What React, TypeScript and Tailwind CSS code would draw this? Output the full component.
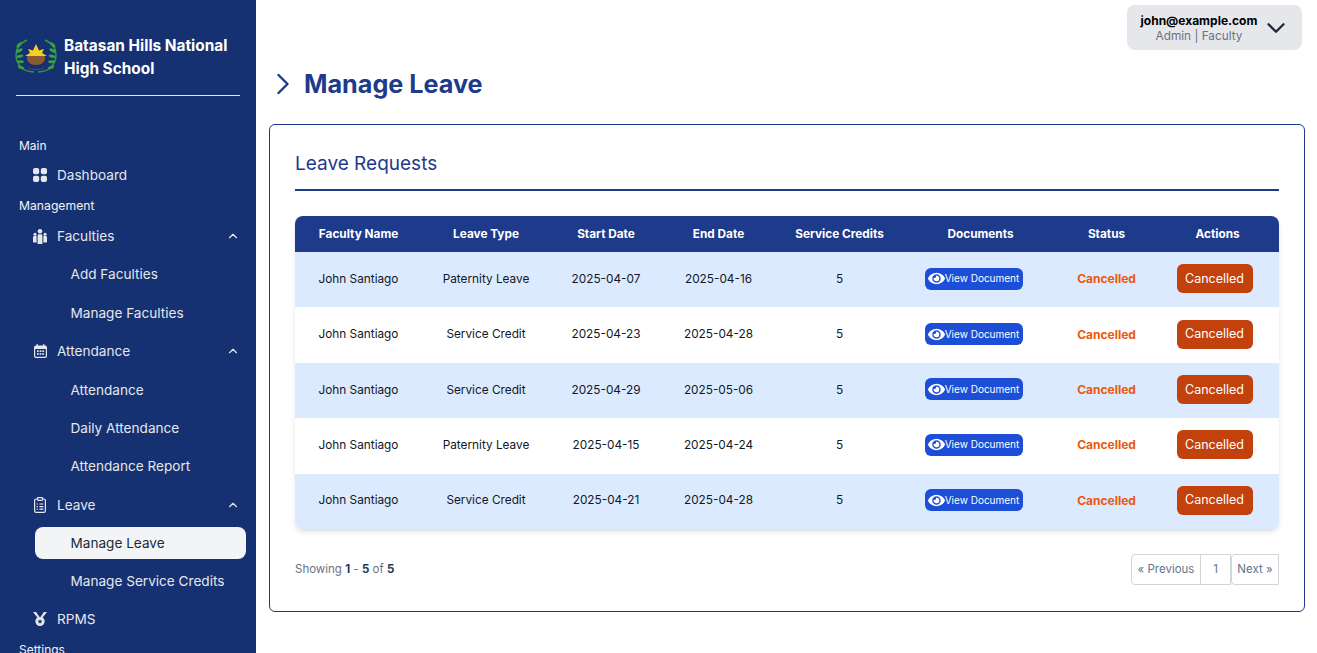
import { ChevronDown, ChevronRight, ChevronUp } from "lucide-react"
import { FaEye } from "react-icons/fa"

const rows = [
  { type: "Paternity Leave", start: "2025-04-07", end: "2025-04-16" },
  { type: "Service Credit", start: "2025-04-23", end: "2025-04-28" },
  { type: "Service Credit", start: "2025-04-29", end: "2025-05-06" },
  { type: "Paternity Leave", start: "2025-04-15", end: "2025-04-24" },
  { type: "Service Credit", start: "2025-04-21", end: "2025-04-28" },
]

const headers = [
  { label: "Faculty Name", width: "w-[127px]" },
  { label: "Leave Type", width: "w-[128px]" },
  { label: "Start Date", width: "w-[112px]" },
  { label: "End Date", width: "w-[113px]" },
  { label: "Service Credits", width: "w-[129px]" },
  { label: "Documents", width: "w-[153px]" },
  { label: "Status", width: "w-[99px]" },
  { label: "Actions", width: "w-[123px]" },
]

function Logo() {
  const leaves = [0, 1, 2, 3, 4]
  return (
    <svg width="46" height="38" viewBox="0 0 46 38" className="shrink-0">
      <path d="M21 35 C10 35 3 27 3 18 C3 11 7 6 14 3" fill="none" stroke="#2f9e3f" strokeWidth="1.4" />
      <path d="M25 35 C36 35 43 27 43 18 C43 11 39 6 32 3" fill="none" stroke="#2f9e3f" strokeWidth="1.4" />
      {leaves.map((i) => (
        <g key={i}>
          <ellipse cx={6 + i * 0.5} cy={8 + i * 5.6} rx="3.4" ry="1.5" fill="#37a244" transform={`rotate(${-50 + i * 18} ${6 + i * 0.5} ${8 + i * 5.6})`} />
          <ellipse cx={40 - i * 0.5} cy={8 + i * 5.6} rx="3.4" ry="1.5" fill="#37a244" transform={`rotate(${50 - i * 18} ${40 - i * 0.5} ${8 + i * 5.6})`} />
        </g>
      ))}
      <path d="M12 19 L17 16 L15 12 L20 13.5 L23 7 L26 13.5 L31 12 L29 16 L34 19 Z" fill="#f5d020" />
      <path d="M14 19 H32 C33 25 28 28 23 28 C18 28 13 25 14 19 Z" fill="#8a5a34" />
      <path d="M15 31 C19 33 27 33 31 31" fill="none" stroke="#7a3a4a" strokeWidth="1" />
    </svg>
  )
}

function DashboardIcon() {
  return (
    <svg width="14" height="14" viewBox="0 0 14 14" fill="currentColor">
      <rect x="0" y="0" width="6.2" height="6.2" rx="2" />
      <rect x="7.8" y="0" width="6.2" height="6.2" rx="2" />
      <rect x="0" y="7.8" width="6.2" height="6.2" rx="2" />
      <rect x="7.8" y="7.8" width="6.2" height="6.2" rx="2" />
    </svg>
  )
}

function PeopleIcon() {
  return (
    <svg width="14" height="15" viewBox="0 0 14 15" fill="currentColor">
      <circle cx="7" cy="2.3" r="2.3" />
      <circle cx="2" cy="5.2" r="1.5" />
      <circle cx="12" cy="5.2" r="1.5" />
      <path d="M4.6 6.6 C4.6 5.6 5.4 5.2 7 5.2 C8.6 5.2 9.4 5.6 9.4 6.6 V15 H4.6 Z" />
      <path d="M0 8.4 C0 7.4 .7 7 1.7 7 H3.6 V13.6 H1 C.4 13.6 0 13.2 0 12.6 Z" />
      <path d="M14 8.4 C14 7.4 13.3 7 12.3 7 H10.4 V13.6 H13 C13.6 13.6 14 13.2 14 12.6 Z" />
    </svg>
  )
}

function CalendarIcon() {
  return (
    <svg width="13" height="14" viewBox="0 0 13 14" fill="currentColor">
      <rect x="2.5" y="0" width="1.4" height="3" rx=".7" />
      <rect x="9.1" y="0" width="1.4" height="3" rx=".7" />
      <path d="M2 1.5 H11 C12.2 1.5 13 2.3 13 3.5 V12 C13 13.2 12.2 14 11 14 H2 C.8 14 0 13.2 0 12 V3.5 C0 2.3 .8 1.5 2 1.5 Z M1.2 5 V11.8 C1.2 12.4 1.6 12.8 2.2 12.8 H10.8 C11.4 12.8 11.8 12.4 11.8 11.8 V5 Z" fillRule="evenodd" />
      <rect x="3" y="6.3" width="1.7" height="1.7" />
      <rect x="5.65" y="6.3" width="1.7" height="1.7" />
      <rect x="8.3" y="6.3" width="1.7" height="1.7" />
      <rect x="3" y="9.1" width="1.7" height="1.7" />
      <rect x="5.65" y="9.1" width="1.7" height="1.7" />
      <rect x="8.3" y="9.1" width="1.7" height="1.7" />
    </svg>
  )
}

function ClipboardIcon() {
  return (
    <svg width="12" height="16" viewBox="0 0 12 16" fill="none" stroke="currentColor" strokeWidth="1.2">
      <rect x=".6" y="2" width="10.8" height="13.4" rx="1.6" />
      <rect x="3.4" y=".6" width="5.2" height="2.8" rx=".8" fill="#163172" />
      <path d="M2.6 7 H3.8 M5.4 7 H9.4 M2.6 9.6 H3.8 M5.4 9.6 H9.4 M2.6 12.2 H3.8 M5.4 12.2 H9.4" />
    </svg>
  )
}

function MedalIcon() {
  return (
    <svg width="16" height="16" viewBox="0 0 16 16" fill="currentColor">
      <path d="M0 0 H3.6 L7 5 L5.2 6.6 Z" />
      <path d="M16 0 H12.4 L9 5 L10.8 6.6 Z" />
      <path fillRule="evenodd" d="M8 5.4 A5.3 5.3 0 1 1 8 16 A5.3 5.3 0 1 1 8 5.4 Z M8 8.2 L8.8 9.8 L10.6 10 L9.3 11.3 L9.6 13 L8 12.2 L6.4 13 L6.7 11.3 L5.4 10 L7.2 9.8 Z" />
    </svg>
  )
}

function NavGroup({ icon, label }: { icon: React.ReactNode; label: string }) {
  return (
    <div className="flex h-[38.4px] items-center pl-[33px] pr-4 text-[#e5e7eb]">
      <span className="flex w-[14px] justify-center">{icon}</span>
      <span className="ml-[10px] flex-1">{label}</span>
      <ChevronUp size={14} />
    </div>
  )
}

function SubItem({ label, active }: { label: string; active?: boolean }) {
  return (
    <div className="py-[3.2px] pl-[35px] pr-[10px]">
      <div
        className={
          active
            ? "flex h-[32px] items-center rounded-lg bg-[#f3f4f6] pl-[35.5px] text-[#1f2937]"
            : "flex h-[32px] items-center pl-[35.5px] text-[#e5e7eb]"
        }
      >
        {label}
      </div>
    </div>
  )
}

function Sidebar() {
  return (
    <aside className="h-[653px] w-64 shrink-0 overflow-hidden bg-[#163172] text-[13.6px]">
      <div className="mx-4 mt-[33px] flex h-[63px] items-start border-b border-[#e5e7eb]">
        <div className="-ml-[3px] mt-[4px]"><Logo /></div>
        <div className="ml-[5px] mt-[1px] text-[15.4px] font-bold leading-[23px] text-white">
          Batasan Hills National High School
        </div>
      </div>
      <div className="mt-[41px] pl-[19px] text-[12px] leading-[18px] text-[#f3f4f6]">Main</div>
      <div className="flex h-[40px] items-center pl-[33px] text-[#e5e7eb]">
        <DashboardIcon />
        <span className="ml-[10px]">Dashboard</span>
      </div>
      <div className="mt-[2px] pl-[19px] text-[12.2px] leading-[18px] text-[#f3f4f6]">Management</div>
      <div className="mt-[2px]">
        <NavGroup icon={<PeopleIcon />} label="Faculties" />
        <SubItem label="Add Faculties" />
        <SubItem label="Manage Faculties" />
        <NavGroup icon={<CalendarIcon />} label="Attendance" />
        <SubItem label="Attendance" />
        <SubItem label="Daily Attendance" />
        <SubItem label="Attendance Report" />
        <NavGroup icon={<ClipboardIcon />} label="Leave" />
        <SubItem label="Manage Leave" active />
        <SubItem label="Manage Service Credits" />
        <div className="flex h-[36.4px] items-center pl-[33px] text-[#e5e7eb]">
          <span className="flex w-[14px] justify-center"><MedalIcon /></span>
          <span className="ml-[10px]">RPMS</span>
        </div>
      </div>
      <div className="mt-[4px] pl-[19px] text-[12px] leading-[18px] text-[#f3f4f6]">Settings</div>
    </aside>
  )
}

function LeaveTable() {
  return (
    <div className="overflow-hidden rounded-lg shadow-md">
      <table className="w-full table-fixed border-collapse text-center text-[11.8px]">
        <thead>
          <tr className="h-[36px] bg-[#1e3a8a] text-white">
            {headers.map((h) => (
              <th key={h.label} className={`${h.width} pt-[1px] font-bold`}>
                {h.label}
              </th>
            ))}
          </tr>
        </thead>
        <tbody>
          {rows.map((row, i) => (
            <tr key={i} className={i % 2 === 0 ? "h-[55.4px] bg-[#dbeafe] text-[#111827]" : "h-[55.4px] bg-white text-[#111827]"}>
              <td>John Santiago</td>
              <td>{row.type}</td>
              <td>{row.start}</td>
              <td>{row.end}</td>
              <td>5</td>
              <td>
                <span className="mr-[14px] inline-flex h-[22px] w-[98px] -translate-y-[1px] items-center justify-center rounded-md bg-[#1d4ed8] align-middle text-[10px] text-white">
                  <FaEye size={17} />
                  View Document
                </span>
              </td>
              <td className="pb-[1px] text-[12px] font-bold text-[#ea580c]">Cancelled</td>
              <td>
                <span className="mr-[6px] inline-flex h-[29px] w-[76px] -translate-y-[1px] items-center justify-center rounded-md bg-[#c2410c] pt-[1px] align-middle text-[12.5px] text-white">
                  Cancelled
                </span>
              </td>
            </tr>
          ))}
        </tbody>
      </table>
    </div>
  )
}

export default function App() {
  return (
    <div className="flex h-[653px] overflow-hidden bg-white font-['Inter',sans-serif]">
      <Sidebar />
      <main className="min-w-0 flex-1">
        <div className="flex justify-end pr-[15px] pt-[5px]">
          <div className="flex h-[45px] w-[175px] items-center rounded-lg bg-[#e5e7eb] pl-[13px] pr-[11px]">
            <div className="flex-1 pt-[1px] text-center">
              <div className="text-[12px] font-bold leading-[15px] text-black">john@example.com</div>
              <div className="text-[11.8px] leading-[16px] text-[#6b7280]">Admin | Faculty</div>
            </div>
            <ChevronDown size={30} strokeWidth={1.9} className="ml-[3px] text-[#1f2937]" />
          </div>
        </div>
        <div className="ml-[9px] mt-[15px] flex h-[38px] items-center text-[#1e3a8a]">
          <ChevronRight size={36} strokeWidth={1.6} />
          <h1 className="ml-[3px] pt-[1px] text-[25.2px] font-bold">Manage Leave</h1>
        </div>
        <section className="ml-[13px] mr-[12px] mt-[21px] h-[488px] rounded-md border border-[#1e3a8a] px-[25px] pt-[24px]">
          <h2 className="h-[42px] border-b-2 border-[#1e3a8a] text-[19px] leading-[29px] text-[#1e3a8a]">
            Leave Requests
          </h2>
          <div className="mt-[25px]">
            <LeaveTable />
          </div>
          <div className="mt-[25px] flex items-center justify-between">
            <div className="pt-[1px] text-[11.5px] text-[#6b7280]">
              Showing <b className="text-[#1e3a5f]">1</b> - <b className="text-[#1e3a5f]">5</b> of <b className="text-[#1e3a5f]">5</b>
            </div>
            <div className="flex h-[31px] text-[11.5px] text-[#64748b]">
              <span className="flex w-[70px] items-center justify-center rounded-l border border-[#d1d5db] pt-[1px]">« Previous</span>
              <span className="-ml-px flex w-[31px] items-center justify-center border border-[#d1d5db] pt-[1px]">1</span>
              <span className="flex w-[48px] items-center justify-center rounded-l border border-[#d1d5db] pt-[1px]">Next »</span>
            </div>
          </div>
        </section>
      </main>
    </div>
  )
}
